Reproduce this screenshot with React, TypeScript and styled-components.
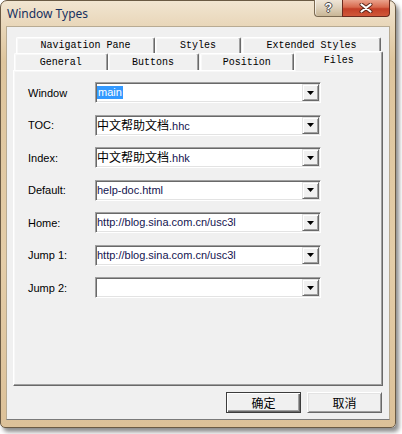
import React from "react";
import styled, { createGlobalStyle } from "styled-components";

const GlobalStyle = createGlobalStyle`
  html, body { margin: 0; padding: 0; background: #ffffff; }
  body {
    width: 402px; height: 434px; overflow: hidden;
    font-family: "Liberation Sans", Arial, sans-serif;
  }
  * { box-sizing: border-box; }
`;

const Window = styled.div`
  width: 396px;
  height: 428px;
  border: 1px solid #6a5a44;
  border-radius: 7px 7px 5px 5px;
  background: linear-gradient(
    180deg,
    #f1e5d1 0px,
    #e9d7ba 24px,
    #dec59d 60px,
    #e4cda8 260px,
    #dcc199 100%
  );
  box-shadow: 3px 4px 4px rgba(0, 0, 0, 0.45);
  padding: 0 5px 7px 5px;
  display: flex;
  flex-direction: column;
`;

const TitleBar = styled.div`
  height: 25px;
  display: flex;
  align-items: flex-start;
`;

const TitleText = styled.div`
  padding-left: 1px;
  line-height: 25px;
  font-family: "Noto Sans", "Open Sans", sans-serif;
  font-size: 12px;
  color: #17305e;
`;

const CaptionGroup = styled.div`
  margin-left: auto;
  margin-top: -1px;
  display: flex;
`;

const HelpButton = styled.div`
  width: 28px;
  height: 17px;
  border: 1px solid #7b6a52;
  border-right: none;
  border-top: none;
  border-radius: 0 0 0 4px;
  background: linear-gradient(180deg, #efe6d8 0%, #ddd0ba 50%, #c9b696 100%);
  box-shadow: inset 1px 0 rgba(255, 255, 255, 0.6);
  display: flex;
  align-items: center;
  justify-content: center;
  font-family: "Liberation Sans", Arial, sans-serif;
  font-weight: bold;
  font-size: 12px;
  color: #ffffff;
  text-shadow: 1px 0 #4a4a4a, -1px 0 #4a4a4a, 0 1px #4a4a4a, 0 -1px #4a4a4a;
`;

const CloseButton = styled.div`
  width: 48px;
  height: 17px;
  border: 1px solid #6b2a1e;
  border-top: none;
  border-radius: 0 0 4px 0;
  background: linear-gradient(180deg, #eaa28c 0%, #d8694d 45%, #c33f27 55%, #d0583a 100%);
  display: flex;
  align-items: center;
  justify-content: center;
`;

const Client = styled.div`
  flex: 1;
  background: #f0f0f0;
  border: 1px solid;
  border-color: #b8ab93 #b8ab93 #7a7a7a #b8ab93;
  padding: 10px 6px 0 6px;
  display: flex;
  flex-direction: column;
`;

const TabStrip = styled.div`
  display: flex;
  flex-direction: column;
`;

const TabRow = styled.div<{ $back?: boolean }>`
  display: flex;
  align-items: flex-end;
  height: ${(p) => (p.$back ? 16 : 17)}px;
  padding-left: ${(p) => (p.$back ? 3 : 1)}px;
`;

const Tab = styled.div<{ $w: number; $gap?: number; $selected?: boolean; $back?: boolean }>`
  width: ${(p) => p.$w}px;
  margin-left: ${(p) => p.$gap ?? 0}px;
  height: ${(p) => (p.$selected ? 20 : p.$back ? 16 : 17)}px;
  margin-bottom: ${(p) => (p.$selected ? -1 : 0)}px;
  position: ${(p) => (p.$selected ? "relative" : "static")};
  z-index: ${(p) => (p.$selected ? 2 : 0)};
  background: #f0f0f0;
  border-top: 1px solid #ffffff;
  border-left: 1px solid #ffffff;
  border-right: 1px solid #696969;
  border-radius: 2px 2px 0 0;
  box-shadow: inset -1px 0 #a0a0a0, inset 1px 1px #f8f8f8;
  display: flex;
  justify-content: center;
  align-items: center;
  padding-bottom: ${(p) => (p.$selected ? 3 : 0)}px;
  font-family: "Liberation Mono", "Courier New", monospace;
  font-weight: normal;
  font-size: 10px;
  color: #000;
  white-space: nowrap;
`;

const Panel = styled.div`
  height: 316px;
  border: 1px solid;
  border-color: #ffffff #696969 #696969 #ffffff;
  box-shadow: inset -1px -1px #a0a0a0, inset 1px 1px #f7f7f7;
  padding: 11px 0 0 14px;
  display: flex;
  flex-direction: column;
  gap: 11.5px;
`;

const FormRow = styled.div`
  display: grid;
  grid-template-columns: 67px 226px;
  height: 21px;
  align-items: center;
`;

const Label = styled.div`
  font-size: 11px;
  color: #000;
`;

const Field = styled.div`
  height: 21px;
  display: flex;
  align-items: center;
  background: #ffffff;
  border: 1px solid;
  border-color: #a0a0a0 #ffffff #ffffff #a0a0a0;
  box-shadow: inset 1px 1px #696969, inset -1px -1px #e3e3e3;
`;

const FieldText = styled.div`
  flex: 1;
  padding-left: 1px;
  font-size: 11px;
  line-height: 17px;
  color: #141450;
  white-space: nowrap;
  overflow: hidden;
`;

const Highlight = styled.span`
  display: inline-block;
  background: #3399ff;
  color: #ffffff;
  padding: 0 1px;
  line-height: 13px;
`;

const Cjk = styled.span`
  font-family: "Noto Sans CJK SC", sans-serif;
  font-size: 12px;
  color: #000;
`;

const DropButton = styled.div`
  width: 17px;
  height: 17px;
  margin-right: 1px;
  background: #f0f0f0;
  border: 1px solid;
  border-color: #e3e3e3 #696969 #696969 #e3e3e3;
  box-shadow: inset 1px 1px #ffffff, inset -1px -1px #a0a0a0;
  display: flex;
  align-items: center;
  justify-content: center;
`;

const ButtonRow = styled.div`
  display: flex;
  justify-content: flex-end;
  gap: 6px;
  margin-top: 6px;
  padding-right: 1px;
`;

const DialogButton = styled.div<{ $default?: boolean }>`
  width: 75px;
  height: 21px;
  background: #f0f0f0;
  border: 1px solid;
  border-color: ${(p) => (p.$default ? "#3c3c3c" : "#ffffff #696969 #696969 #ffffff")};
  box-shadow: ${(p) =>
    p.$default
      ? "inset 1px 1px #ffffff, inset -1px -1px #696969, inset -2px -2px #a0a0a0"
      : "inset 1px 1px #e3e3e3, inset -1px -1px #a0a0a0"};
  display: flex;
  align-items: center;
  justify-content: center;
  font-family: "Noto Sans CJK SC", sans-serif;
  font-size: 12px;
  color: #000;
`;

const Arrow = () => (
  <svg width="7" height="4" viewBox="0 0 7 4">
    <polygon points="0,0 7,0 3.5,4" fill="#000" />
  </svg>
);

const CloseGlyph = () => (
  <svg width="14" height="10" viewBox="0 0 14 10">
    <path d="M2.5 1.5 L11.5 8.5 M11.5 1.5 L2.5 8.5" stroke="#5a2418" strokeWidth="4" strokeLinecap="round" />
    <path d="M2.5 1.5 L11.5 8.5 M11.5 1.5 L2.5 8.5" stroke="#ffffff" strokeWidth="2.2" strokeLinecap="round" />
  </svg>
);

type Row = { label: string; cjk?: string; text: string; selected?: boolean };

const rows: Row[] = [
  { label: "Window", text: "main", selected: true },
  { label: "TOC:", cjk: "中文帮助文档", text: ".hhc" },
  { label: "Index:", cjk: "中文帮助文档", text: ".hhk" },
  { label: "Default:", text: "help-doc.html" },
  { label: "Home:", text: "http://blog.sina.com.cn/usc3l" },
  { label: "Jump 1:", text: "http://blog.sina.com.cn/usc3l" },
  { label: "Jump 2:", text: "" },
];

export default function App() {
  return (
    <>
      <GlobalStyle />
      <Window>
        <TitleBar>
          <TitleText>Window Types</TitleText>
          <CaptionGroup>
            <HelpButton>?</HelpButton>
            <CloseButton>
              <CloseGlyph />
            </CloseButton>
          </CaptionGroup>
        </TitleBar>
        <Client>
          <TabStrip>
            <TabRow $back>
              <Tab $back $w={139}>Navigation Pane</Tab>
              <Tab $back $w={86}>Styles</Tab>
              <Tab $back $w={139} $gap={1}>Extended Styles</Tab>
            </TabRow>
            <TabRow>
              <Tab $w={94}>General</Tab>
              <Tab $w={91}>Buttons</Tab>
              <Tab $w={95} $gap={1}>Position</Tab>
              <Tab $w={89} $selected>Files</Tab>
            </TabRow>
          </TabStrip>
          <Panel>
            {rows.map((r) => (
              <FormRow key={r.label}>
                <Label>{r.label}</Label>
                <Field>
                  <FieldText>
                    {r.selected ? (
                      <Highlight>{r.text}</Highlight>
                    ) : (
                      <>
                        {r.cjk && <Cjk>{r.cjk}</Cjk>}
                        {r.text}
                      </>
                    )}
                  </FieldText>
                  <DropButton>
                    <Arrow />
                  </DropButton>
                </Field>
              </FormRow>
            ))}
          </Panel>
          <ButtonRow>
            <DialogButton $default>确定</DialogButton>
            <DialogButton>取消</DialogButton>
          </ButtonRow>
        </Client>
      </Window>
    </>
  );
}
